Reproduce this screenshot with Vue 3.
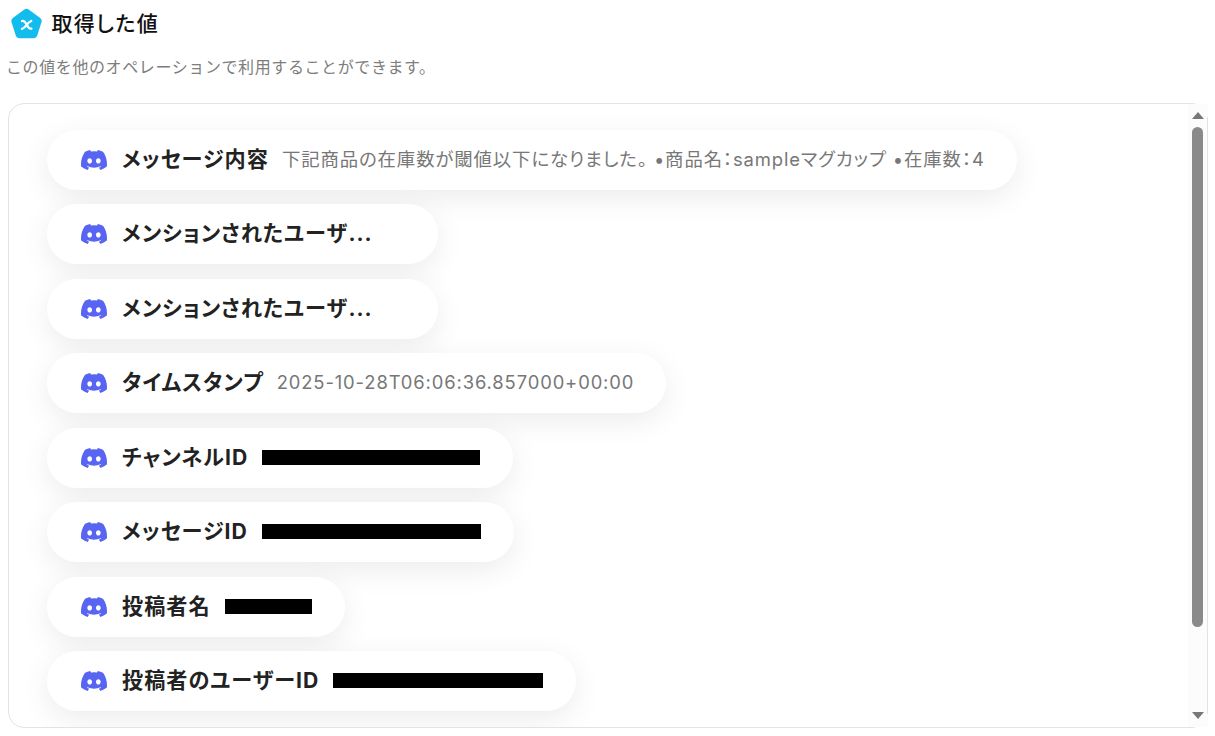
<template>
  <div class="page">
    <header class="head">
      <svg class="brand" viewBox="0 0 32 32" width="33" height="33" aria-hidden="true">
        <path d="M13.6 1.6a4 4 0 0 1 4.8 0l10.6 7.8a4 4 0 0 1 1.5 4.5l-4 12.6a4 4 0 0 1-3.9 2.9H9.4a4 4 0 0 1-3.9-2.9l-4-12.6A4 4 0 0 1 3 9.4z" fill="#12bdee" />
        <path d="M11.6 12.6c2.6-.6 3.6 1.6 4.6 3.6s2 4.4 4.6 3.8M20.6 12.6c-2.4 1-3.4 2.4-4.4 3.8s-2.2 3-4.6 3.8" fill="none" stroke="#fff" stroke-width="2.2" stroke-linecap="round" />
      </svg>
      <h1 class="title">取得した値</h1>
    </header>
    <p class="lead">この値を他のオペレーションで利用することができます。</p>
    <section class="box">
      <ul class="list">
        <li v-for="(item, index) in items" :key="index" class="pill" :class="{ 'pill--clipped': item.clipped }">
          <svg class="discord" viewBox="0 0 24 24" width="26" height="26" aria-hidden="true">
            <path d="M20.317 4.37a19.791 19.791 0 0 0-4.885-1.515.074.074 0 0 0-.079.037c-.21.375-.444.864-.608 1.25a18.27 18.27 0 0 0-5.487 0 12.64 12.64 0 0 0-.617-1.25.077.077 0 0 0-.079-.037A19.736 19.736 0 0 0 3.677 4.37a.07.07 0 0 0-.032.027C.533 9.046-.32 13.58.099 18.057a.082.082 0 0 0 .031.057 19.9 19.9 0 0 0 5.993 3.03.078.078 0 0 0 .084-.028c.462-.63.874-1.295 1.226-1.994a.076.076 0 0 0-.041-.106 13.107 13.107 0 0 1-1.872-.892.077.077 0 0 1-.008-.128 10.2 10.2 0 0 0 .372-.292.074.074 0 0 1 .077-.01c3.928 1.793 8.18 1.793 12.062 0a.074.074 0 0 1 .078.01c.12.098.246.198.373.292a.077.077 0 0 1-.006.127 12.299 12.299 0 0 1-1.873.892.077.077 0 0 0-.041.107c.36.698.772 1.362 1.225 1.993a.076.076 0 0 0 .084.028 19.839 19.839 0 0 0 6.002-3.03.077.077 0 0 0 .032-.054c.5-5.177-.838-9.674-3.549-13.66a.061.061 0 0 0-.031-.03zM8.02 15.33c-1.183 0-2.157-1.085-2.157-2.419 0-1.333.956-2.419 2.157-2.419 1.21 0 2.176 1.096 2.157 2.42 0 1.333-.956 2.418-2.157 2.418zm7.975 0c-1.183 0-2.157-1.085-2.157-2.419 0-1.333.955-2.419 2.157-2.419 1.21 0 2.176 1.096 2.157 2.42 0 1.333-.946 2.418-2.157 2.418z" fill="#5865f2" />
          </svg>
          <span class="label">{{ item.label }}</span>
          <span v-if="item.value" class="value">{{ item.value }}</span>
          <span v-if="item.redact" class="redact" :style="{ width: item.redact + 'px' }"></span>
        </li>
      </ul>
      <div class="scrollbar" aria-hidden="true">
        <span class="arrow arrow--up"></span>
        <span class="thumb"></span>
        <span class="arrow arrow--down"></span>
      </div>
    </section>
  </div>
</template>

<script setup>
const items = [
  { label: 'メッセージ内容', value: '下記商品の在庫数が閾値以下になりました。 •商品名：sampleマグカップ •在庫数：4' },
  { label: 'メンションされたユーザ...', clipped: true },
  { label: 'メンションされたユーザ...', clipped: true },
  { label: 'タイムスタンプ', value: '2025-10-28T06:06:36.857000+00:00' },
  { label: 'チャンネルID', redact: 218 },
  { label: 'メッセージID', redact: 219 },
  { label: '投稿者名', redact: 87 },
  { label: '投稿者のユーザーID', redact: 210 }
]
</script>

<style>
html,
body {
  background: #fff;
}
</style>

<style scoped>
.page {
  width: 1215px;
  height: 736px;
  overflow: hidden;
  padding: 8px 7px 8px 8px;
  box-sizing: border-box;
  font-family: Inter, "Noto Sans CJK JP", sans-serif;
  font-feature-settings: "palt";
  color: #1f1f1f;
}

.head {
  display: flex;
  align-items: center;
  gap: 8.5px;
  height: 32px;
  padding-left: 2px;
}

.brand {
  flex-shrink: 0;
}

.title {
  margin: 0;
  font-size: 21px;
  font-weight: 500;
  line-height: 32px;
  letter-spacing: 1.35px;
  color: #111;
}

.lead {
  margin: 16px 0 0 -2px;
  font-size: 16px;
  font-feature-settings: normal;
  line-height: 22px;
  letter-spacing: 0.6px;
  color: #7d7d7d;
}

.box {
  position: relative;
  height: 625px;
  margin-top: 25px;
  box-sizing: border-box;
  border: 1px solid #e3e3e3;
  border-radius: 16px;
}

.list {
  display: flex;
  flex-direction: column;
  align-items: flex-start;
  gap: 14.5px;
  height: 100%;
  margin: 0;
  padding: 25.9px 0 0 38px;
  box-sizing: border-box;
  border-radius: 15px;
  overflow: hidden;
  list-style: none;
}

.pill {
  display: flex;
  align-items: center;
  height: 60px;
  padding: 0 32px 0 34px;
  box-sizing: border-box;
  border-radius: 30px;
  background: #fff;
  box-shadow: 0 8px 30px rgba(0, 0, 0, 0.08);
  flex-shrink: 0;
}

.pill--clipped {
  width: 391px;
}

.discord {
  flex-shrink: 0;
  margin-right: 15px;
}

.label {
  flex-shrink: 0;
  font-size: 21.15px;
  font-weight: 700;
  line-height: 26px;
  letter-spacing: 1px;
  white-space: nowrap;
  color: #222;
}

.value {
  margin-left: 13px;
  padding-bottom: 2px;
  font-size: 18.4px;
  line-height: 26px;
  letter-spacing: 0.88px;
  white-space: nowrap;
  color: #777;
}

.redact {
  height: 15px;
  margin: 0 1px 1px 14px;
  background: #000;
}

.scrollbar {
  position: absolute;
  top: 0;
  right: -1px;
  bottom: 0;
  width: 20px;
  display: flex;
  flex-direction: column;
  align-items: center;
  padding-right: 1px;
  box-sizing: border-box;
  background: #fcfcfc;
}

.scrollbar::after {
  content: "";
  position: absolute;
  top: 13px;
  right: 0;
  bottom: 13px;
  width: 1px;
  background: #e3e3e3;
}

.arrow {
  flex-shrink: 0;
  width: 0;
  height: 0;
  border-left: 6.5px solid transparent;
  border-right: 6.5px solid transparent;
}

.arrow--up {
  margin-top: 8px;
  border-bottom: 7px solid #777;
}

.arrow--down {
  margin-top: 85px;
  border-top: 7px solid #777;
}

.thumb {
  flex-shrink: 0;
  width: 11px;
  height: 500px;
  margin-top: 8px;
  border-radius: 6px;
  background: #8a8a8a;
}
</style>
